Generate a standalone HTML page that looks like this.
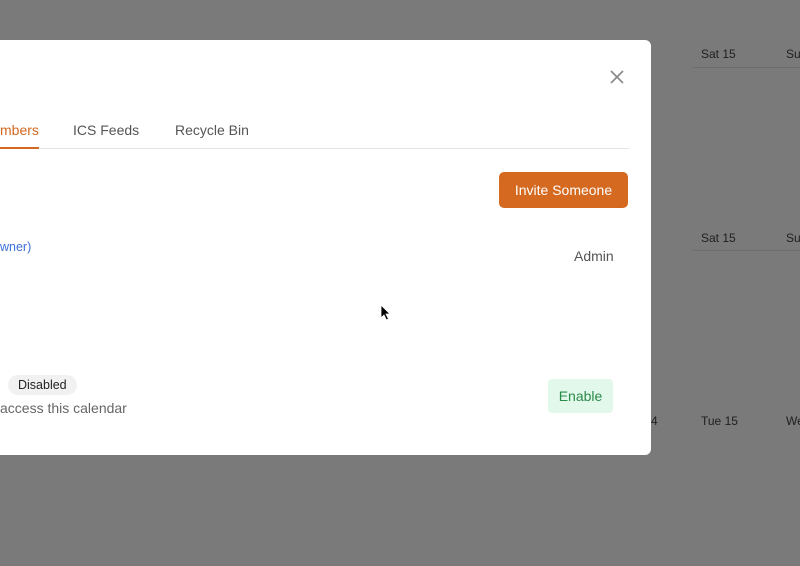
<!DOCTYPE html>
<html><head><style>
body{margin:0;width:800px;height:566px;background:#7a7a7a;font-family:"Liberation Sans",sans-serif;position:relative;overflow:hidden}
.t{position:absolute;font-size:12px;color:#1f1f1f}
.m{position:absolute;left:-20px;top:40px;width:671px;height:415px;background:#fff;border-radius:6px}
.a{position:absolute;font-size:14px}
</style></head><body>
<div class="t" style="left:701px;top:47px">Sat 15</div>
<div class="t" style="left:786px;top:47px">Su</div>
<div style="position:absolute;left:693px;top:67px;width:107px;border-top:1px solid #6e6e6e"></div>
<div class="t" style="left:701px;top:231px">Sat 15</div>
<div class="t" style="left:786px;top:231px">Su</div>
<div style="position:absolute;left:693px;top:250px;width:107px;border-top:1px solid #6e6e6e"></div>
<div class="t" style="left:701px;top:414px">Tue 15</div>
<div class="t" style="left:786px;top:414px">We</div>
<div class="t" style="left:651px;top:414px">4</div>
<div class="m">
<svg style="position:absolute;left:630px;top:30px" width="14" height="14"><path d="M1 1L13 13M13 1L1 13" stroke="#888" stroke-width="1.6"/></svg>
<div style="position:absolute;left:20px;top:108px;width:629px;border-top:1.5px solid #e5e5e5"></div>
<div style="position:absolute;left:20px;top:107px;width:39px;border-top:2px solid #d4691f"></div>
<div class="a" style="left:20px;top:82px;color:#d4691f">mbers</div>
<div class="a" style="left:93px;top:82px;color:#555">ICS Feeds</div>
<div class="a" style="left:195px;top:82px;color:#555">Recycle Bin</div>
<div style="position:absolute;left:519px;top:132px;width:129px;height:36px;background:#d4691f;border-radius:5px;color:#fff;font-size:14px;line-height:36px;text-align:center">Invite Someone</div>
<div style="position:absolute;left:20px;top:200px;font-size:12.5px;color:#3b6fd8">wner)</div>
<div class="a" style="left:594px;top:208px;color:#555">Admin</div>
<div style="position:absolute;left:28px;top:335px;padding:0 10px;height:20px;line-height:20px;background:#f1f1f1;border-radius:10px;font-size:12.5px;color:#222">Disabled</div>
<div class="a" style="left:20px;top:360px;color:#666">access this calendar</div>
<div style="position:absolute;left:568px;top:339px;width:65px;height:34px;background:#e2f8ea;border-radius:4px;color:#2a8a4a;font-size:14px;line-height:34px;text-align:center">Enable</div>
</div>
<svg style="position:absolute;left:380px;top:304px" width="12" height="18"><path d="M1 1L1 14L4 11L6.5 16L8.5 15L6 10L10 10Z" fill="#000" stroke="#fff" stroke-width="0.8"/></svg>
</body></html>
